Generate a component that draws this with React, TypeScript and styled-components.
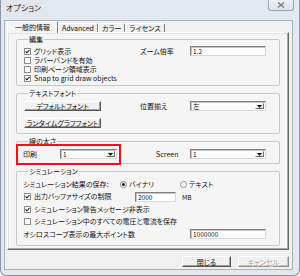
import React from 'react'
import styled, {createGlobalStyle, css} from 'styled-components'

const GlobalStyle = createGlobalStyle`
  html, body {
    margin: 0;
    padding: 0;
    background: #ffffff;
  }
  body {
    font-family: "Noto Sans CJK JP", "Noto Sans", sans-serif;
    font-feature-settings: "palt";
    font-size: 7px;
    color: #111;
  }
`

const Window = styled.div`
  width: 300px;
  height: 276px;
  box-sizing: border-box;
  display: flex;
  flex-direction: column;
  background: #e3e8ef;
  border: 1px solid #8a96a6;
  border-top: none;
  border-radius: 0 0 6px 6px;
  padding: 0 6px 5px 3px;
`

const TitleBar = styled.div`
  height: 20px;
  display: flex;
  align-items: flex-start;
`

const Title = styled.div`
  font-size: 8px;
  line-height: 10px;
  margin: 3px 0 0 2px;
  color: #1a1a1a;
`

const CloseButton = styled.div`
  margin-left: auto;
  margin-right: -1px;
  width: 26px;
  height: 11px;
  box-sizing: border-box;
  border: 1px solid #9aa4b2;
  border-top: none;
  border-radius: 0 0 3px 3px;
  background: linear-gradient(#eef0f3, #dfe2e7);
  display: flex;
  align-items: center;
  justify-content: center;
`

const Client = styled.div`
  flex: 1;
  display: flex;
  flex-direction: column;
  background: #f0f0f0;
  border: 1px solid #a9b3c0;
  padding: 0 3px 0 2px;
`

const TabStrip = styled.div`
  height: 11px;
  display: flex;
  align-items: flex-end;
  position: relative;
  z-index: 1;
`

const Tab = styled.div<{$active?: boolean}>`
  height: 9px;
  line-height: 9px;
  padding: 0 3px;
  background: #f0f0f0;
  border-top: 1px solid #ffffff;
  border-left: 1px solid #ffffff;
  border-right: 1px solid #7a7a7a;
  border-radius: 2px 2px 0 0;
  box-sizing: border-box;
  white-space: nowrap;
  ${p =>
    p.$active &&
    css`
      height: 12px;
      line-height: 10px;
      padding: 0 7px;
      margin-bottom: -1px;
      background: #f5f5f5;
    `}
`

const Panel = styled.div`
  flex: 1;
  display: flex;
  flex-direction: column;
  gap: 3px;
  background: #f5f5f5;
  border-top: 1px solid #ffffff;
  border-left: 1px solid #ffffff;
  border-right: 1px solid #6a6a6a;
  border-bottom: 1px solid #6a6a6a;
  box-shadow: inset -1px -1px 0 #a8a8a8, inset 1px 1px 0 #e2e2e2;
  padding: 2px 8px 1px 8px;
`

const Group = styled.fieldset<{$pad: string}>`
  position: relative;
  margin: 0;
  min-width: 0;
  padding: ${p => p.$pad};
  border: 1px solid #c6c6c6;
  border-radius: 2px;
`

const Legend = styled.legend`
  margin-left: 5px;
  padding: 0 1px;
  line-height: 8px;
  font-size: 7px;
`

const Grid = styled.div<{$cols: string; $rows: string; $gap?: number}>`
  display: grid;
  grid-template-columns: ${p => p.$cols};
  grid-auto-rows: ${p => p.$rows};
  row-gap: ${p => p.$gap ?? 0}px;
  align-items: center;
`

const Label = styled.span`
  line-height: 9px;
  white-space: nowrap;
`

const CheckRow = styled.label`
  display: flex;
  align-items: center;
  gap: 3px;
  margin-left: 1px;
  line-height: 9px;
  white-space: nowrap;
`

const Box = styled.span`
  width: 7px;
  height: 7px;
  box-sizing: border-box;
  border: 1px solid #8e8f8f;
  background: #ffffff;
  display: flex;
  align-items: center;
  justify-content: center;
  flex: none;
`

const RadioDot = styled.span<{$on?: boolean}>`
  width: 7px;
  height: 7px;
  box-sizing: border-box;
  border-radius: 50%;
  border: 1px solid #8e8f8f;
  background: #ffffff;
  flex: none;
  display: flex;
  align-items: center;
  justify-content: center;
  &::after {
    content: '';
    width: 3px;
    height: 3px;
    border-radius: 50%;
    background: ${p => (p.$on ? '#1a1a1a' : 'transparent')};
  }
`

const Field = styled.div<{$w: number}>`
  width: ${p => p.$w}px;
  height: 10px;
  box-sizing: border-box;
  background: #ffffff;
  border-top: 1px solid #7f7f7f;
  border-left: 1px solid #7f7f7f;
  border-right: 1px solid #d8d8d8;
  border-bottom: 1px solid #d8d8d8;
  box-shadow: inset 1px 1px 0 #c4c4c4;
  display: flex;
  align-items: center;
  padding-left: 2px;
  line-height: 8px;
  font-size: 6.5px;
`

const DropButton = styled.span`
  margin-left: auto;
  margin-right: 1px;
  width: 9px;
  height: 6px;
  box-sizing: border-box;
  background: #f0f0f0;
  border-top: 1px solid #ffffff;
  border-left: 1px solid #ffffff;
  border-right: 1px solid #6a6a6a;
  border-bottom: 1px solid #6a6a6a;
  display: flex;
  align-items: center;
  justify-content: center;
`

const Button = styled.div<{$w: number; $h?: number; $disabled?: boolean}>`
  width: ${p => p.$w}px;
  height: ${p => p.$h ?? 10}px;
  box-sizing: border-box;
  background: #f0f0f0;
  border-top: 1px solid #ffffff;
  border-left: 1px solid #ffffff;
  border-right: 1px solid #555555;
  border-bottom: 1px solid #555555;
  box-shadow: inset -1px -1px 0 #a0a0a0;
  display: flex;
  align-items: center;
  justify-content: center;
  white-space: nowrap;
  line-height: 8px;
  ${p =>
    p.$disabled &&
    css`
      color: #a6a6a6;
      text-shadow: 1px 1px 0 #ffffff;
      border-right-color: #8c8c8c;
      border-bottom-color: #8c8c8c;
      box-shadow: inset -1px -1px 0 #c4c4c4;
    `}
`

const Indented = styled.div`
  margin-left: 1px;
`

// red annotation frame drawn over the "印刷" setting
const Highlight = styled.div`
  position: absolute;
  left: -1px;
  top: -1px;
  width: 105px;
  height: 21px;
  box-sizing: border-box;
  border: 2px solid #e8141c;
`

const SimRows = styled.div`
  display: flex;
  flex-direction: column;
`

const SimRow = styled.div`
  height: 12.5px;
  display: flex;
  align-items: center;
`

const Cell = styled.div<{$w: number}>`
  width: ${p => p.$w}px;
  flex: none;
  display: flex;
  align-items: center;
  gap: 1px;
  white-space: nowrap;
`

const Unit = styled.span`
  margin-left: 6px;
  font-size: 6.5px;
`

const Footer = styled.div`
  height: 19px;
  box-sizing: border-box;
  padding-top: 6px;
  display: flex;
  justify-content: flex-end;
  gap: 7px;
`

function Check({checked, children}: {checked?: boolean; children: React.ReactNode}) {
  return (
    <CheckRow>
      <Box>
        {checked && (
          <svg width="5" height="5" viewBox="0 0 5 5">
            <path d="M0.5 2.4 L1.9 3.8 L4.5 1" stroke="#111" strokeWidth="1.1" fill="none" />
          </svg>
        )}
      </Box>
      {children}
    </CheckRow>
  )
}

function Radio({on, children}: {on?: boolean; children: React.ReactNode}) {
  return (
    <Cell $w={60}>
      <RadioDot $on={on} />
      <Label style={{marginLeft: 1}}>{children}</Label>
    </Cell>
  )
}

function Select({width, value}: {width: number; value: string}) {
  return (
    <Field $w={width}>
      {value}
      <DropButton>
        <svg width="5" height="3" viewBox="0 0 5 3">
          <polygon points="0,0 5,0 2.5,3" fill="#111" />
        </svg>
      </DropButton>
    </Field>
  )
}

export default function App() {
  return (
    <>
      <GlobalStyle />
      <Window>
        <TitleBar>
          <Title>オプション</Title>
          <CloseButton>
            <svg width="8" height="6" viewBox="0 0 8 6">
              <path d="M1 0.5 L7 5.5 M7 0.5 L1 5.5" stroke="#7b7f86" strokeWidth="1.4" />
            </svg>
          </CloseButton>
        </TitleBar>
        <Client>
          <TabStrip>
            <Tab $active>一般的情報</Tab>
            <Tab>Advanced</Tab>
            <Tab>カラー</Tab>
            <Tab>ライセンス</Tab>
          </TabStrip>
          <Panel>
            <Group $pad="3.5px 6px 2.5px">
              <Legend>編集</Legend>
              <Grid $cols="117px 50px 76px" $rows="9px">
                <Check checked>グリッド表示</Check>
                <Label>ズーム倍率</Label>
                <Field $w={76}>1.2</Field>
                <Check>ラバーバンドを有効</Check>
                <span />
                <span />
                <Check>印刷ページ領域表示</Check>
                <span />
                <span />
                <Check checked>Snap to grid draw objects</Check>
              </Grid>
            </Group>

            <Group $pad="4px 6px 5px">
              <Legend>テキストフォント</Legend>
              <Grid $cols="117px 50px 76px" $rows="10px" $gap={7}>
                <Indented>
                  <Button $w={77}>デフォルトフォント</Button>
                </Indented>
                <Label>位置揃え</Label>
                <Select width={76} value="左" />
                <Indented>
                  <Button $w={77}>ランタイムグラフフォント</Button>
                </Indented>
              </Grid>
            </Group>

            <Group $pad="4px 6px 4px">
              <Legend>線の太さ</Legend>
              <Highlight />
              <Grid $cols="37px 57px 39px 34px 76px" $rows="10px">
                <Label>印刷</Label>
                <Select width={57} value="1" />
                <span />
                <Label>Screen</Label>
                <Select width={76} value="1" />
              </Grid>
            </Group>

            <Group $pad="3px 6px 4.5px">
              <Legend>シミュレーション</Legend>
              <SimRows>
                <SimRow>
                  <Cell $w={97}>シミュレーション結果の保存:</Cell>
                  <Radio on>バイナリ</Radio>
                  <Radio>テキスト</Radio>
                </SimRow>
                <SimRow>
                  <Cell $w={112}>
                    <Check checked>出力バッファサイズの制限</Check>
                  </Cell>
                  <Field $w={41}>2000</Field>
                  <Unit>MB</Unit>
                </SimRow>
                <SimRow>
                  <Check checked>シミュレーション警告メッセージ非表示</Check>
                </SimRow>
                <SimRow>
                  <Check>シミュレーション中のすべての電圧と電流を保存</Check>
                </SimRow>
                <SimRow>
                  <Cell $w={167}>オシロスコープ表示の最大ポイント数</Cell>
                  <Field $w={76}>1000000</Field>
                </SimRow>
              </SimRows>
            </Group>
          </Panel>
          <Footer>
            <Button $w={49} $h={11}>閉じる</Button>
            <Button $w={51} $h={11} $disabled>
              キャンセル
            </Button>
          </Footer>
        </Client>
      </Window>
    </>
  )
}
